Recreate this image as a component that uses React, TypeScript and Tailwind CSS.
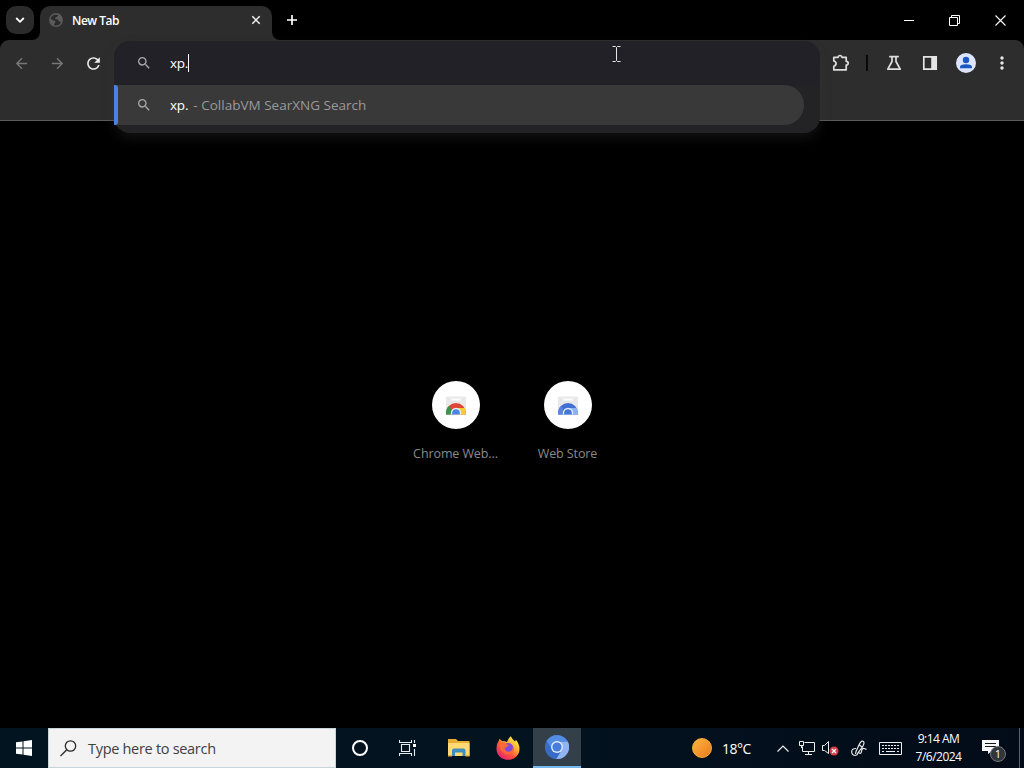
import type { ReactNode } from 'react';
import { MdArrowBack, MdArrowForward, MdMoreVert, MdRefresh, MdSearch } from 'react-icons/md';

function IconSlot({ children, className = '' }: { children: ReactNode; className?: string }) {
  return <div className={`flex h-9 w-9 shrink-0 items-center justify-center ${className}`}>{children}</div>;
}

function GlobeIcon() {
  return (
    <svg width="14" height="14" viewBox="0 0 14 14">
      <circle cx="7" cy="7" r="6.2" fill="#2b2b2b" stroke="#5c5c5c" strokeWidth="1.4" />
      <path d="M1 5.5 4.5 7.5 6.5 8 6 10 4.5 12.5 1.5 10zM5 1.5 9.5 1 9 3 6.5 4.5 6 6 9 6.5 10 8.5 13 9 13 5 10.5 2z" fill="#5c5c5c" />
    </svg>
  );
}

function TabStrip() {
  return (
    <div className="flex h-10 items-start pl-1.5">
      <button className="mt-1.5 flex h-7 w-7 items-center justify-center rounded-[10px] bg-[#2b2b2b]">
        <svg width="10" height="10" viewBox="0 0 10 10" fill="none" stroke="#fff" strokeWidth="1.8">
          <path d="M1.2 3 5 6.8 8.8 3" />
        </svg>
      </button>
      <div className="relative ml-1.5 mt-1.5 flex h-[34px] w-[232px] items-center rounded-t-[10px] bg-[#2d2d2d] pl-[9px] pr-[11px]">
        <svg className="absolute -left-2 bottom-0" width="8" height="8" viewBox="0 0 8 8">
          <path d="M8 0V8H0A8 8 0 0 0 8 0" fill="#2d2d2d" />
        </svg>
        <svg className="absolute -right-2 bottom-0" width="8" height="8" viewBox="0 0 8 8">
          <path d="M0 0V8H8A8 8 0 0 1 0 0" fill="#2d2d2d" />
        </svg>
        <div className="-mt-[6px]">
          <GlobeIcon />
        </div>
        <span className="-mt-[5px] ml-[9px] flex-1 text-[12px] font-semibold tracking-[-0.5px] text-white">New Tab</span>
        <svg className="-mt-[6px]" width="10" height="10" viewBox="0 0 10 10" stroke="#f2f2f2" strokeWidth="1.5">
          <path d="M1.3 1.3 8.7 8.7M8.7 1.3 1.3 8.7" />
        </svg>
      </div>
      <svg className="ml-[15px] mt-[15px]" width="10" height="10" viewBox="0 0 10 10" stroke="#fff" strokeWidth="1.7">
        <path d="M0 5H10M5 0V10" />
      </svg>
      <div className="ml-auto flex h-10 text-white">
        <div className="flex w-[46px] items-center justify-center">
          <div className="h-px w-2.5 bg-white" />
        </div>
        <div className="flex w-[46px] items-center justify-center pr-px">
          <svg width="11" height="11" viewBox="0 0 11 11" fill="none" stroke="#fff">
            <path d="M.5 2.5H8.5V10.5H.5zM2.5 2.5V.5H10.5V8.5H8.5" />
          </svg>
        </div>
        <div className="flex w-[46px] items-center justify-center pr-px">
          <svg width="11" height="11" viewBox="0 0 11 11" stroke="#fff" strokeWidth="1.1">
            <path d="M.5 .5 10.5 10.5M10.5 .5 .5 10.5" />
          </svg>
        </div>
      </div>
    </div>
  );
}

function Omnibox() {
  return (
    <div className="absolute left-[114px] top-px h-[92px] w-[706px] rounded-[16px] bg-[#232325] shadow-[0_6px_12px_rgba(60,60,60,0.28)]">
      <div className="flex h-[44px] items-center rounded-t-[16px] bg-[#222127] pl-[22px]">
        <MdSearch size={16} color="#aaaaaa" />
        <span className="ml-[18px] text-[13.5px] tracking-[-0.3px] text-white">xp.</span>
        <div className="h-[18px] w-px bg-white" />
      </div>
      <div className="flex h-10 w-[690px] items-center rounded-r-full bg-[#393939]">
        <div className="h-10 w-1 rounded-r-[3px] bg-[#4c80e6]" />
        <MdSearch className="ml-[18px]" size={16} color="#aaaaaa" />
        <span className="ml-[18px] text-[13.5px] tracking-[-0.2px] text-white">xp.</span>
        <span className="ml-[5px] mt-px whitespace-pre text-[13.5px] tracking-[0.01px] text-[#9a9a9a]">- CollabVM SearXNG Search</span>
      </div>
      <svg className="absolute left-[498px] top-[5px]" width="9" height="17" viewBox="0 0 9 17" fill="none" stroke="#e4e4e4">
        <path d="M.5 .5H3.5L4.5 1.5 5.5 .5H8.5M4.5 1.5V14.5M.5 15.5H3.5L4.5 14.5 5.5 15.5H8.5" />
      </svg>
    </div>
  );
}

function Toolbar() {
  return (
    <div className="relative z-10 h-[81px] rounded-t-[9px] border-b border-[#5b5b5b] bg-[#2d2d2d]">
      <div className="flex h-[46px] items-center pl-1 pr-1">
        <IconSlot className="pr-px">
          <MdArrowBack size={17} color="#777777" />
        </IconSlot>
        <IconSlot className="pr-px">
          <MdArrowForward size={17} color="#777777" />
        </IconSlot>
        <IconSlot className="pr-px">
          <MdRefresh size={19} color="#ededed" />
        </IconSlot>
        <IconSlot className="ml-auto">
          <svg width="18" height="18" viewBox="0 0 18 18" fill="none" stroke="#dedede" strokeWidth="1.7" strokeLinejoin="round">
            <path d="M1.8 3.3H6.2Q6.3 1.5 8 1.5T9.8 3.3H14.2V7.4Q16.2 7.6 16.2 9.2T14.2 11V15.8H1.8V12.2Q4.1 11.6 4.1 9.6T1.8 7z" />
          </svg>
        </IconSlot>
        <div className="ml-[7px] mr-[8px] h-4 w-[2px] bg-[#090909]" />
        <IconSlot>
          <svg width="16" height="16" viewBox="0 0 16 16" fill="none" stroke="#dedede" strokeWidth="1.7" strokeLinejoin="round">
            <path d="M3.2 1.6H12.8M6 2V6.5L1.8 14.2H14.2L10 6.5V2" />
          </svg>
        </IconSlot>
        <IconSlot>
          <svg width="16" height="16" viewBox="0 0 16 16">
            <path d="M1.8 1.8H14.2V14.2H1.8z" fill="none" stroke="#e4e4e4" strokeWidth="1.7" />
            <path d="M9.2 1.5H15V14.5H9.2z" fill="#e4e4e4" />
          </svg>
        </IconSlot>
        <IconSlot>
          <div className="flex h-5 w-5 items-center justify-center rounded-full bg-[#dce5fb]">
            <svg width="20" height="20" viewBox="0 0 20 20" fill="#1c58c4">
              <circle cx="10" cy="7" r="3.2" />
              <path d="M4 15.2V14Q4 11.3 10 11.3T16 14V15.2z" />
            </svg>
          </div>
        </IconSlot>
        <IconSlot>
          <MdMoreVert size={20} color="#e8e8e8" />
        </IconSlot>
      </div>
      <Omnibox />
    </div>
  );
}

type StoreColors = { red: string; yellow: string; green: string; blue: string };

function StoreIcon({ colors }: { colors: StoreColors }) {
  return (
    <svg width="24" height="24" viewBox="0 0 24 24">
      <path d="M2 3.5H22V21.5H2z" fill="#e9e9e9" />
      <path d="M8 6.5H16" stroke="#fafafa" strokeWidth="2" strokeLinecap="round" />
      <path d="M2 21.5V20A10 10 0 0 1 22 20V21.5z" fill={colors.red} />
      <path d="M2 21.5V20Q2 15.5 5 12.8L10 21.5z" fill={colors.green} />
      <path d="M12 15H20.8Q22 17.5 22 21.5H13z" fill={colors.yellow} />
      <path d="M6.8 21.5V20A5.2 5.2 0 0 1 17.2 20V21.5z" fill="#e6edf8" />
      <path d="M8.2 21.5V20A3.8 3.8 0 0 1 15.8 20V21.5z" fill={colors.blue} />
    </svg>
  );
}

const shortcuts = [
  { label: 'Chrome Web...', colors: { red: '#df4637', yellow: '#f5ca3c', green: '#35964c', blue: '#4787df' } },
  { label: 'Web Store', colors: { red: '#426fd2', yellow: '#8cb2f3', green: '#5b85df', blue: '#4378d9' } },
];

function NewTabPage() {
  return (
    <main className="flex flex-1 justify-center pt-[260px]">
      {shortcuts.map((s) => (
        <div key={s.label} className="flex w-28 flex-col items-center">
          <div className="flex h-12 w-12 items-center justify-center rounded-full bg-white">
            <StoreIcon colors={s.colors} />
          </div>
          <span className="mt-4 whitespace-nowrap pr-px text-[12.5px] leading-[18px] tracking-[-0.1px] text-[#8a8a8a]">{s.label}</span>
        </div>
      ))}
    </main>
  );
}

function FolderIcon() {
  return (
    <svg width="22" height="20" viewBox="0 0 22 20">
      <path d="M0 1H8L10 3H21.5V18H0z" fill="#e9ae36" />
      <path d="M0 5H21.5V18H0z" fill="#ffda73" />
      <path d="M4 18V12.5Q4 10.5 6 10.5H15.5Q17.5 10.5 17.5 12.5V18H14.5V14.5H7V18z" fill="#408ebc" />
      <path d="M0 17H4V18.5H0zM17.5 17H21.5V18.5H17.5z" fill="#e9ae36" />
    </svg>
  );
}

function FirefoxIcon() {
  return (
    <svg width="24" height="24" viewBox="0 0 24 24">
      <defs>
        <linearGradient id="fox" x1="0.85" y1="0.1" x2="0.2" y2="0.9">
          <stop offset="0" stopColor="#fff04b" />
          <stop offset="0.35" stopColor="#ffa92e" />
          <stop offset="0.65" stopColor="#ff503d" />
          <stop offset="1" stopColor="#e8286f" />
        </linearGradient>
      </defs>
      <path d="M14.8 .3Q16 3 19 5.4Q20 4.8 19.7 3.5Q23.5 8 23.5 13A11.5 10.8 0 0 1 .5 13Q.2 8 2.8 4.8L3.5 2.8 6 5Q8 4.5 11 6Q12 2.5 14.8 .3z" fill="url(#fox)" />
      <circle cx="12.3" cy="12" r="5" fill="#824adb" />
      <path d="M3 7Q7 5.6 10 8.2L13 8.8Q12 10.8 9.8 11.2Q8.2 12 9 14Q10.5 16.3 14 15.5Q17.3 14.5 16.8 10Q19 14 16.2 17Q12.5 19.5 8.5 17.8Q4 15.5 3 7z" fill="#ff6838" />
    </svg>
  );
}

function ChromiumIcon() {
  return (
    <svg width="24" height="24" viewBox="0 0 24 24">
      <circle cx="12" cy="12" r="12" fill="#3c76d4" />
      <path d="M12 6.5H22.7A12 12 0 0 1 11 24L16.8 14.8z" fill="#8fb4f0" />
      <path d="M1.7 6A12 12 0 0 0 11 24L16.8 14.8 7.2 14.8z" fill="#386bc5" />
      <path d="M1.7 6A12 12 0 0 1 22.5 6.5H12L7.3 14.5z" fill="#558ce3" />
      <circle cx="12" cy="12" r="6" fill="#dfebff" />
      <circle cx="12" cy="12" r="4.6" fill="#487dda" />
    </svg>
  );
}

function Tray() {
  return (
    <div className="ml-auto flex h-10 items-center text-white">
      <div className="h-5 w-5 rounded-full border border-[#f7ae3d] bg-linear-to-br from-[#ffb53b] to-[#e77a22]" />
      <span className="ml-[10px] w-[55px] whitespace-nowrap text-[14px] tracking-[-0.5px]">18°C</span>
      <svg width="12" height="7" viewBox="0 0 12 7" fill="none" stroke="#eee" strokeWidth="1.2">
        <path d="M.5 6.5 6 1 11.5 6.5" />
      </svg>
      <svg className="ml-[10px]" width="16" height="14" viewBox="0 0 16 14" fill="none" stroke="#eee">
        <path d="M5.5 1.5H15.5V10.5H3.5V5.5M9.5 10.5V13M6 13.5H13M.5 .5H4.5V4.5H.5zM2.5 4.5V7" />
      </svg>
      <svg className="ml-[7px]" width="17" height="16" viewBox="0 0 17 16">
        <path d="M.5 5.5H2.5L6.5 1.5V13.5L2.5 10.5H.5z" fill="none" stroke="#eee" />
        <circle cx="12" cy="11" r="4.5" fill="#d53c49" />
        <path d="M10 9 14 13M14 9 10 13" stroke="#fff" strokeWidth="1.3" />
      </svg>
      <svg className="ml-[12px]" width="16" height="17" viewBox="0 0 16 17" fill="none" stroke="#e8e8e8" strokeWidth="1.2">
        <path d="M5 8.5Q.5 8.5 .7 12T4.5 15.5Q6.5 15 7 12.8L12 6Q14 2 12 1.2T8.2 4.5L5 11.5 4.5 14M7.5 12Q10 15 10.5 11.5T13 8.5 15.5 9.5M8.5 5 11 7" />
      </svg>
      <svg className="ml-[12px]" width="23" height="13" viewBox="0 0 23 13" fill="none" stroke="#eee">
        <path d="M.5 .5H22.5V12.5H.5z" />
        <path d="M3 3.5H20M3 6.5H20" strokeDasharray="2 1" />
        <path d="M3 9.5H5M7 9.5H16M18 9.5H20" />
      </svg>
      <div className="w-[73px] text-center text-[12px] leading-[18px] tracking-[-0.5px]">
        <div>9:14 AM</div>
        <div>7/6/2024</div>
      </div>
      <div className="relative ml-[7px] h-6 w-[37px]">
        <svg className="absolute left-0 top-0" width="17" height="18" viewBox="0 0 17 18">
          <path d="M0 4H17V15H10L6 18V15H0z" fill="#f7f7f7" />
          <path d="M3 7.5H14M3 10.5H14" stroke="#111820" />
        </svg>
        <span className="absolute left-2 top-2.5 flex h-4 w-4 items-center justify-center rounded-full border border-[#777] bg-[#30363c] text-[11px]">
          1
        </span>
      </div>
      <div className="h-10 w-[5px] border-l border-[#59616a]" />
    </div>
  );
}

function Taskbar() {
  return (
    <div className="flex h-10 items-center bg-linear-to-r from-[#02141f] via-[#031320] to-[#030b18]">
      <div className="flex w-12 items-center justify-center">
        <svg width="16" height="16" viewBox="0 0 16 16" fill="#fff">
          <path d="M0 2.3 6.5 1.4V7.5H0zM7.5 1.2 16 0V7.5H7.5zM0 8.5H6.5V14.6L0 13.7zM7.5 8.5H16V16L7.5 14.8z" />
        </svg>
      </div>
      <div className="flex h-10 w-72 items-center border border-[#c7d3da] bg-[#f3f3f3] pl-[11px]">
        <svg width="17" height="17" viewBox="0 0 17 17" fill="none" stroke="#292929" strokeWidth="1.3">
          <circle cx="10.5" cy="6" r="5.2" />
          <path d="M6.8 9.7 .5 16" />
        </svg>
        <span className="ml-[11px] mt-px text-[14.5px] tracking-[-0.3px] text-[#404040]">Type here to search</span>
      </div>
      <div className="flex w-12 justify-center">
        <div className="h-4 w-4 rounded-full border-2 border-white" />
      </div>
      <div className="flex w-[49px] justify-center pr-[2px]">
        <svg width="17" height="16" viewBox="0 0 17 16" fill="none" stroke="#e8edf0" strokeWidth="1.1">
          <path d="M2.5 4.5H10.5V11.5H2.5zM.5 0V2.5H12.5V0M.5 16V13.5H12.5V16M15.5 0V3M15.5 9V16" />
          <path d="M14 4H17V7H14z" fill="#fff" stroke="none" />
        </svg>
      </div>
      <div className="flex w-[51px] justify-center">
        <FolderIcon />
      </div>
      <div className="flex w-[49px] justify-center pr-[2px]">
        <FirefoxIcon />
      </div>
      <div className="flex h-10 w-12 items-center justify-center border-b-2 border-[#76b9ed] bg-[#334049]">
        <ChromiumIcon />
      </div>
      <Tray />
    </div>
  );
}

export default function App() {
  return (
    <div className="flex h-screen w-full flex-col overflow-hidden bg-black font-['Open_Sans','Noto_Sans',sans-serif]">
      <TabStrip />
      <Toolbar />
      <NewTabPage />
      <Taskbar />
    </div>
  );
}
